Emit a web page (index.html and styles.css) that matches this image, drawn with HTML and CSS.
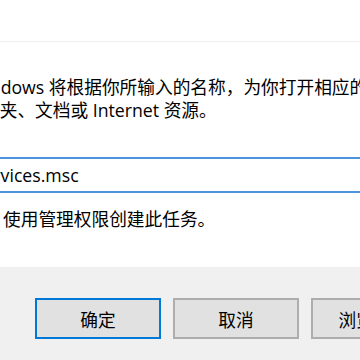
FILE: index.html
```html
<!DOCTYPE html>
<html lang="zh-CN">
<head>
  <meta charset="UTF-8" />
  <title>运行</title>
  <link rel="stylesheet" href="styles.css">
</head>
<body>
  <div class="dialog">
    <div class="titlebar"></div>
    <div class="main">
      <div class="desc">
        <div class="line line1">Windows 将根据你所输入的名称，为你打开相应的程序、</div>
        <div class="line line2">件夹、文档或 Internet 资源。</div>
      </div>
      <div class="open-box">
        <span class="open-text">services.msc</span>
      </div>
      <div class="admin-note">使用管理权限创建此任务。</div>
    </div>
    <div class="footer">
      <button class="btn btn-default">确定</button>
      <button class="btn">取消</button>
      <button class="btn">浏览(B)...</button>
    </div>
  </div>
</body>
</html>
```

FILE: styles.css
```css
html, body {
  margin: 0;
  padding: 0;
}
body {
  width: 360px;
  height: 360px;
  overflow: hidden;
  background: #fff;
  font-family: "Open Sans", "Noto Sans CJK SC", sans-serif;
  font-size: 17.7px;
  color: #000;
}
.dialog {
  width: 360px;
  height: 360px;
  display: flex;
  flex-direction: column;
}
.titlebar {
  height: 41px;
  border-bottom: 1px solid #efefef;
}
.main {
  height: 225px;
  display: flex;
  flex-direction: column;
}
.desc {
  margin-top: 34px;
}
.line {
  line-height: 23px;
  white-space: nowrap;
}
.line1 {
  margin-left: -31px;
}
.line2 {
  margin-left: -18px;
}
.open-box {
  margin-top: 35px;
  margin-left: -60px;
  width: 480px;
  height: 36px;
  box-sizing: border-box;
  border: 2px solid #4b95dd;
  display: flex;
  align-items: center;
  padding-left: 33px;
}
.open-text {
  white-space: nowrap;
}
.admin-note {
  margin-top: 15px;
  margin-left: 3px;
  line-height: 23px;
  white-space: nowrap;
}
.footer {
  flex: 1;
  background: #f0f0f0;
  display: flex;
  align-items: flex-start;
  gap: 12px;
  padding: 31px 0 0 35px;
}
.btn {
  flex: none;
  width: 126px;
  height: 41px;
  box-sizing: border-box;
  background: #e1e1e1;
  border: 2px solid #adadad;
  font-family: inherit;
  font-size: 17.7px;
  color: #000;
  padding: 0;
}
.btn-default {
  border-color: #0078d7;
}
```
